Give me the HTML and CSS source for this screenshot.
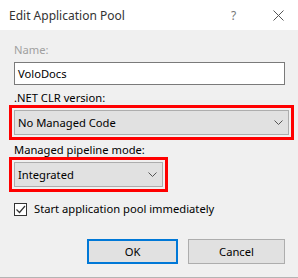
FILE: index.html
```html
<!DOCTYPE html>
<html lang="en">
<head>
  <meta charset="UTF-8" />
  <title>Edit Application Pool</title>
  <link rel="stylesheet" href="styles.css">
</head>
<body>
  <div class="dialog">
    <div class="titlebar">
      <span class="title">Edit Application Pool</span>
      <span class="help">?</span>
      <span class="close">
        <svg width="11" height="11" viewBox="0 0 11 11"><path d="M0.5 0.5 L10.5 10.5 M10.5 0.5 L0.5 10.5" stroke="#555" stroke-width="1" fill="none"/></svg>
      </span>
    </div>

    <div class="content">
      <div class="label disabled label-name">Name:</div>
      <div class="textbox">VoloDocs</div>

      <div class="label label-clr">.NET CLR version:</div>
      <div class="mark mark-wide">
        <div class="combo">
          <span>No Managed Code</span>
          <svg class="chev" width="9" height="5" viewBox="0 0 9 5"><path d="M0.5 0.5 L4.5 4.5 L8.5 0.5" stroke="#555" stroke-width="1" fill="none"/></svg>
        </div>
      </div>

      <div class="label label-mode">Managed pipeline mode:</div>
      <div class="mark mark-narrow">
        <div class="combo">
          <span>Integrated</span>
          <svg class="chev" width="9" height="5" viewBox="0 0 9 5"><path d="M0.5 0.5 L4.5 4.5 L8.5 0.5" stroke="#555" stroke-width="1" fill="none"/></svg>
        </div>
      </div>

      <div class="check">
        <span class="box">
          <svg width="11" height="11" viewBox="0 0 11 11"><path d="M1.5 5.5 L4.5 8.5 L10 2" stroke="#333" stroke-width="1.2" fill="none"/></svg>
        </span>
        <span>Start application pool immediately</span>
      </div>

      <div class="buttons">
        <button class="btn btn-ok">OK</button>
        <button class="btn btn-cancel">Cancel</button>
      </div>
    </div>
  </div>
</body>
</html>
```

FILE: styles.css
```css
body {
  margin: 0;
  font-family: 'Noto Sans', 'DejaVu Sans', sans-serif;
  font-size: 12px;
  color: #000;
  background: #f0f0f0;
}
.dialog {
  width: 298px;
  height: 278px;
  box-sizing: border-box;
  border-bottom: 1px solid #b4b4b4;
  background: #f0f0f0;
}
.titlebar {
  height: 30px;
  background: #fff;
  display: flex;
  align-items: center;
  padding-left: 9px;
}
.title {
  color: #333;
  flex: 1;
}
.help {
  color: #777;
  width: 14px;
  margin-right: 28px;
}
.close {
  display: flex;
  margin-right: 14px;
}
.content {
  padding-left: 9px;
  font-size: 11.2px;
}
.label {
  line-height: 14px;
  margin-left: 5px;
}
.disabled {
  color: #a0a0a0;
}
.label-name {
  padding-top: 13px;
}
.textbox {
  margin: 5px 0 0 5px;
  width: 271px;
  height: 23px;
  box-sizing: border-box;
  border: 1px solid #7a7a7a;
  background: #fff;
  padding-left: 3px;
  display: flex;
  align-items: center;
}
.label-clr {
  margin-top: 6px;
}
.label-mode {
  margin-top: 3px;
}
.mark {
  border: 3px solid #ff0000;
  padding: 2px;
}
.mark-wide {
  width: 275px;
}
.mark-narrow {
  width: 149px;
}
.combo {
  height: 25px;
  box-sizing: border-box;
  border: 1px solid #adadad;
  background: #e1e1e1;
  display: flex;
  align-items: center;
  justify-content: space-between;
  padding: 0 5px 0 3px;
}
.chev {
  display: block;
}
.check {
  display: flex;
  align-items: center;
  margin: 10px 0 0 5px;
  line-height: 14px;
}
.box {
  width: 13px;
  height: 13px;
  box-sizing: border-box;
  border: 1px solid #333;
  background: #fff;
  display: flex;
  align-items: center;
  justify-content: center;
  margin-right: 7px;
}
.buttons {
  display: flex;
  margin: 23px 0 0 78px;
  gap: 10px;
}
.btn {
  height: 25px;
  font-family: inherit;
  font-size: 11.2px;
  color: #000;
  background: #e1e1e1;
  border: 1px solid #adadad;
  padding: 0;
  box-sizing: border-box;
}
.btn-ok {
  width: 91px;
  border: 2px solid #0078d7;
}
.btn-cancel {
  width: 97px;
}
```
